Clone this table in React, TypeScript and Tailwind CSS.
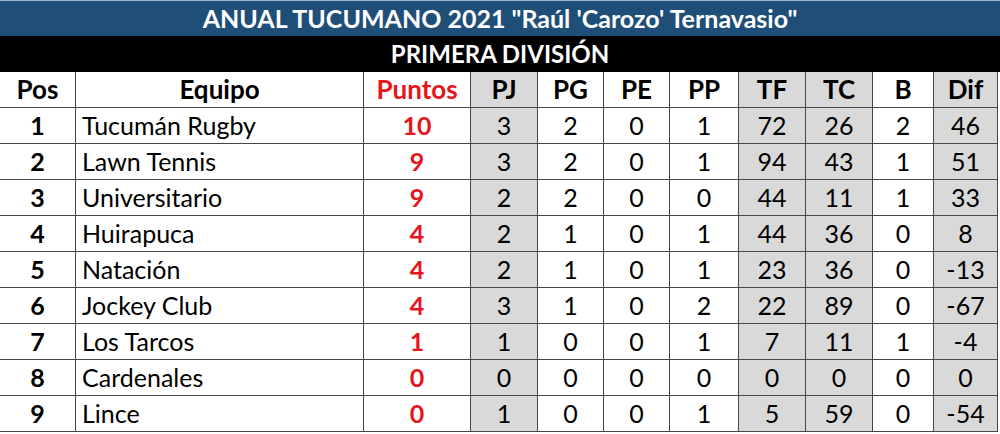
const COLS = [
  { key: 'pos', label: 'Pos', gray: false },
  { key: 'team', label: 'Equipo', gray: false },
  { key: 'pts', label: 'Puntos', gray: false },
  { key: 'pj', label: 'PJ', gray: true },
  { key: 'pg', label: 'PG', gray: false },
  { key: 'pe', label: 'PE', gray: false },
  { key: 'pp', label: 'PP', gray: false },
  { key: 'tf', label: 'TF', gray: true },
  { key: 'tc', label: 'TC', gray: true },
  { key: 'b', label: 'B', gray: false },
  { key: 'dif', label: 'Dif', gray: true },
];

type Row = [number, string, number, number, number, number, number, number, number, number, number];

const ROWS: Row[] = [
  [1, 'Tucumán Rugby', 10, 3, 2, 0, 1, 72, 26, 2, 46],
  [2, 'Lawn Tennis', 9, 3, 2, 0, 1, 94, 43, 1, 51],
  [3, 'Universitario', 9, 2, 2, 0, 0, 44, 11, 1, 33],
  [4, 'Huirapuca', 4, 2, 1, 0, 1, 44, 36, 0, 8],
  [5, 'Natación', 4, 2, 1, 0, 1, 23, 36, 0, -13],
  [6, 'Jockey Club', 4, 3, 1, 0, 2, 22, 89, 0, -67],
  [7, 'Los Tarcos', 1, 1, 0, 0, 1, 7, 11, 1, -4],
  [8, 'Cardenales', 0, 0, 0, 0, 0, 0, 0, 0, 0],
  [9, 'Lince', 0, 1, 0, 0, 1, 5, 59, 0, -54],
];

const cellBase = 'h-[36px] flex items-center border-r border-b border-[#474747]';

const App = () => {
  return (
    <div className="w-[1000px] h-[434px] bg-white overflow-hidden font-['Lato',sans-serif] text-black">
      <div className="h-[36px] bg-[#1f4e79] border-t border-[#9db3cc] flex items-center justify-center text-white font-bold text-[25px]">
        ANUAL TUCUMANO 2021 "Raúl 'Carozo' Ternavasio"
      </div>
      <div className="h-[36px] bg-black flex items-center justify-center text-white font-bold text-[24px]">
        PRIMERA DIVISIÓN
      </div>
      <div className="w-[998px] grid grid-cols-[76px_288px_107px_67px_66px_66px_69px_67px_67px_61px_64px]">
        {COLS.map((c) => (
          <div
            key={c.key}
            className={`${cellBase} justify-center font-bold text-[26px] ${c.gray ? 'bg-[#d9d9d9]' : 'bg-white'} ${
              c.key === 'pts' ? 'text-[#e8141b]' : ''
            }`}
          >
            {c.label}
          </div>
        ))}
        {ROWS.map((r) =>
          r.map((v, i) => {
            const c = COLS[i];
            let cls = 'justify-center text-[25px]';
            if (c.key === 'pos') cls = 'justify-center font-bold text-[25px]';
            if (c.key === 'team') cls = 'justify-start pl-[6px] text-[25px]';
            if (c.key === 'pts') cls = 'justify-center font-bold text-[25px] text-[#e8141b]';
            return (
              <div
                key={`${r[0]}-${c.key}`}
                className={`${cellBase} ${cls} ${c.gray ? 'bg-[#d9d9d9]' : 'bg-white'}`}
              >
                {v}
              </div>
            );
          })
        )}
      </div>
    </div>
  );
};

export default App;
